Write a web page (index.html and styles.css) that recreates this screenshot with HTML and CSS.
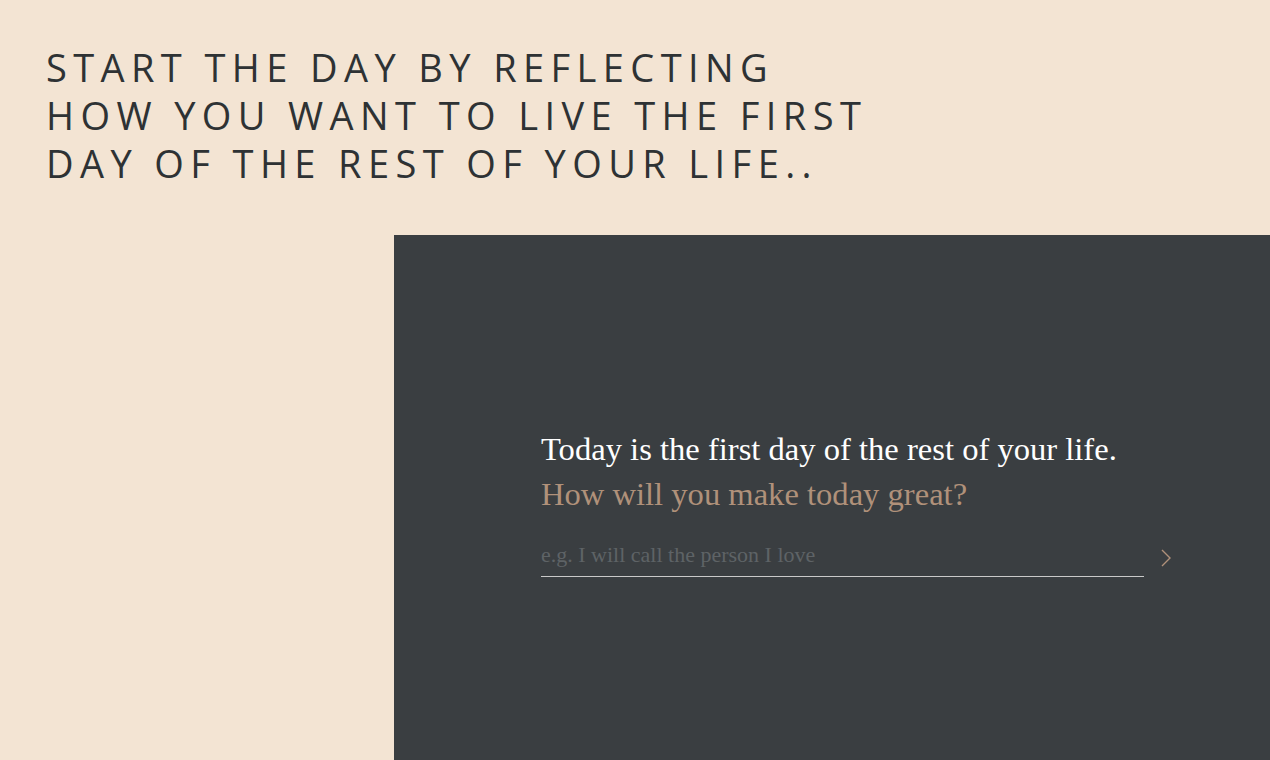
FILE: index.html
```html
<!DOCTYPE html>
<html>
  <head>
    <meta name="viewport" content="width=device-width,initial-scale=1.0">
    <title>First day</title>
    <link rel="stylesheet" href="styles.css">
  </head>
  <body>
    <header class="intro">
      <h1>Start the day by reflecting<br>how you want to live the first<br>day of the rest of your life..</h1>
    </header>

    <!-- Reflection panel -->
    <section class="panel">
      <div class="prompt">
        <p class="lead">Today is the first day of the rest of your life.</p>
        <p class="question">How will you make today great?</p>
        <form class="answer" action="">
          <input class="answer-input" type="text" placeholder="e.g. I will call the person I love" autocomplete="off">
          <button class="answer-btn" type="submit" aria-label="Next">
            <svg width="12" height="20" viewBox="0 0 12 20"><path d="M2 2 L10 10 L2 18" fill="none" stroke="#b0917a" stroke-width="1.4"/></svg>
          </button>
        </form>
      </div>
    </section>
  </body>
</html>
```

FILE: styles.css
```css
html, body { height: 100%; }
body {
  margin: 0;
  background: #f3e4d3;
  display: flex;
  flex-direction: column;
  overflow: hidden;
}

.intro {
  padding: 43px 0 0 46px;
  height: 235px;
  flex-shrink: 0;
  box-sizing: border-box;
}
.intro h1 {
  margin: 0;
  font-family: "Open Sans", sans-serif;
  font-weight: 400;
  font-size: 38px;
  line-height: 48px;
  letter-spacing: 6.4px;
  text-transform: uppercase;
  color: #2e3234;
}

/* Reflection panel */
.panel {
  flex: 1;
  margin-left: 394px;
  background: #3a3e41;
  padding: 192px 0 0 147px;
}
.prompt {
  width: 660px;
  font-family: "Liberation Serif", serif;
}
.lead, .question {
  margin: 0;
  font-size: 32.6px;
  line-height: 45px;
}
.lead { color: #ffffff; }
.question { color: #b0917a; }

.answer {
  display: flex;
  align-items: center;
  margin-top: 25px;
}
.answer-input {
  width: 603px;
  background: transparent;
  border: none;
  border-bottom: 1px solid #c9c9c9;
  padding: 0 0 8px;
  font-family: "Liberation Serif", serif;
  font-size: 22px;
  color: #e0e0e0;
  outline: none;
}
.answer-input::placeholder { color: #5e6366; }
.answer-btn {
  background: none;
  border: none;
  padding: 0 0 4px;
  margin-left: 16px;
  cursor: pointer;
  display: flex;
}
```
